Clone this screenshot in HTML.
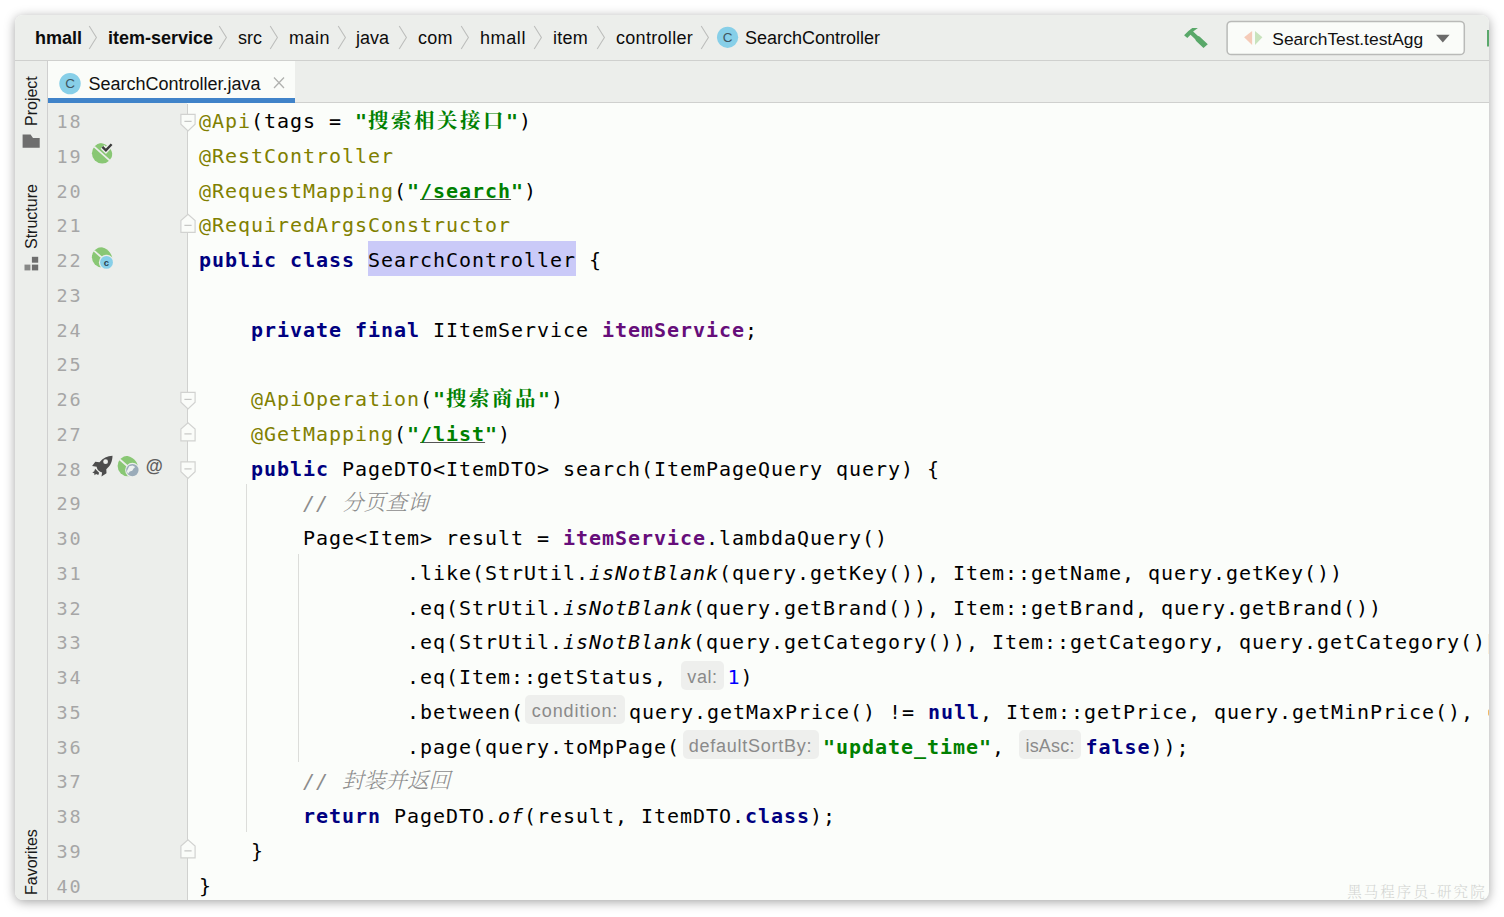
<!DOCTYPE html>
<html lang="zh-CN">
<head>
<meta charset="utf-8">
<title>SearchController.java</title>
<style>
html,body{margin:0;padding:0;background:#fff;}
body{width:1504px;height:917px;overflow:hidden;position:relative;font-family:"Liberation Sans","Noto Sans CJK SC",sans-serif;}
#win{position:absolute;left:15px;top:15px;width:1474px;height:885px;border-radius:8px;overflow:hidden;background:#fbfdfa;box-shadow:0 2px 11px rgba(0,0,0,.36);}
#win *{box-sizing:border-box;}
.abs{position:absolute;}
#nav{position:absolute;left:0;top:0;width:1474px;height:46px;background:#eceeeb;border-bottom:1px solid #cfd0ce;}
#nav .bc{position:absolute;top:11.5px;font-size:18px;line-height:22px;color:#0c0c0c;white-space:nowrap;}
#nav .b{font-weight:bold;}
#tabs{position:absolute;left:33px;top:46px;width:1441px;height:42px;background:#eceeeb;border-bottom:1px solid #cfd0ce;}
#tab{position:absolute;left:0;top:0;width:247px;height:42px;background:#fafcf9;border-bottom:5px solid #4083c9;}
#strip{position:absolute;left:0;top:46px;width:33px;height:839px;background:#eceeeb;border-right:1px solid #cfcfcf;}
.vt{position:absolute;left:0;height:33px;line-height:33px;font-size:16px;color:#1a1a1a;white-space:nowrap;transform-origin:0 0;transform:rotate(-90deg);}
#gutter{position:absolute;left:33px;top:88px;width:139px;height:797px;background:#eceeeb;}
#gline{position:absolute;left:172px;top:89px;width:1px;height:796px;background:#d0d1cf;}
#ed{position:absolute;left:173px;top:87px;width:1301px;height:798px;overflow:hidden;}
.ln{position:absolute;left:41.4px;height:34.75px;line-height:34.75px;font-family:"DejaVu Sans Mono","Liberation Mono",monospace;font-size:18.5px;letter-spacing:1.862px;color:#a6a6a6;white-space:pre;}
.cl{position:absolute;left:11px;height:34.75px;line-height:34.75px;font-family:"DejaVu Sans Mono","Liberation Mono",monospace;font-size:20.0px;letter-spacing:0.959px;color:#000;white-space:pre;}
.k{color:#000080;font-weight:bold;}
.a{color:#808000;}
.s{color:#008000;font-weight:bold;}
.f{color:#660e7a;font-weight:bold;}
.c{color:#8c8c8c;font-style:italic;}
.n{color:#0000ff;}
.i{font-style:italic;}
.u{text-decoration:underline;text-decoration-color:#555;text-decoration-thickness:1px;text-underline-offset:0.5px;text-decoration-skip-ink:none;}
.hlr{position:absolute;background:#cacaf8;}
.z{font-family:"Noto Serif CJK SC",serif;font-size:20.5px;letter-spacing:2.5px;font-weight:bold;line-height:20px;}
.zc{font-family:"Noto Serif CJK SC",serif;font-size:21.7px;letter-spacing:0;font-weight:300;line-height:20px;}
.hint{display:inline-block;vertical-align:top;height:29px;line-height:33.5px;margin-top:0.5px;background:#eeefed;border-radius:5px;color:#8a8a8a;font-family:"Liberation Sans",sans-serif;font-weight:normal;font-style:normal;text-align:center;white-space:nowrap;overflow:hidden;}
.guide{position:absolute;width:1px;background:#dcddda;}
#wm{position:absolute;right:2.3px;bottom:-0.5px;font-family:"Noto Serif CJK SC",serif;font-size:14.5px;font-weight:300;letter-spacing:2.07px;line-height:20px;color:#d3d5d2;white-space:nowrap;}
</style>
</head>
<body>
<div id="win">
<div id="nav">
<span class="bc b" style="left:20px">hmall</span>
<span class="bc b" style="left:93px">item-service</span>
<span class="bc" style="left:223px">src</span>
<span class="bc" style="left:274px;letter-spacing:0.5px">main</span>
<span class="bc" style="left:341px">java</span>
<span class="bc" style="left:403px;letter-spacing:0.3px">com</span>
<span class="bc" style="left:465px;letter-spacing:0.6px">hmall</span>
<span class="bc" style="left:538px;letter-spacing:0.25px">item</span>
<span class="bc" style="left:601px;letter-spacing:0.3px">controller</span>
<span class="bc" style="left:730px">SearchController</span>
<svg class="abs" style="left:0;top:0" width="1474" height="45" viewBox="0 0 1474 45">
<g fill="none" stroke="#bdbebc" stroke-width="1.1">
<path d="M74.2 11 L81.4 22.5 L74.2 34"/>
<path d="M204.2 11 L211.4 22.5 L204.2 34"/>
<path d="M255.2 11 L262.4 22.5 L255.2 34"/>
<path d="M323.2 11 L330.4 22.5 L323.2 34"/>
<path d="M384.2 11 L391.4 22.5 L384.2 34"/>
<path d="M446.2 11 L453.4 22.5 L446.2 34"/>
<path d="M519.2 11 L526.4 22.5 L519.2 34"/>
<path d="M582.2 11 L589.4 22.5 L582.2 34"/>
<path d="M686.2 11 L693.4 22.5 L686.2 34"/>
</g>
<circle cx="712.6" cy="22.3" r="10.6" fill="#87cfe8"/>
<text x="712.6" y="27" text-anchor="middle" font-family="Liberation Sans, sans-serif" font-size="13.5" fill="#3f5560">C</text>
<!-- hammer -->
<path d="M1169.1 20.2 L1172.3 23.1 L1175.5 19.7 L1180 23.9 L1181.1 26.1 L1188.5 33 L1192.8 29.3 L1184.5 21.5 L1182.7 20.7 L1178.1 16.5 L1182.9 13 L1177.3 13 L1173.4 16 Z" fill="#59a869"/>
<!-- run config box -->
<rect x="1212.1" y="6.4" width="237.2" height="33.2" rx="4.2" ry="4.2" fill="#fafcf9" stroke="#b9bab8" stroke-width="1.5"/>
<path d="M1237.1 16 L1237.1 30 L1229.1 22.3 Z" fill="#f5cbb8"/>
<path d="M1240 16 L1240 30 L1247.4 22.3 Z" fill="#c8e3bd"/>
<text x="1257.3" y="30.1" font-family="Liberation Sans, sans-serif" font-size="17.4" fill="#111">SearchTest.testAgg</text>
<path d="M1421 19.8 L1434.6 19.8 L1427.8 27.6 Z" fill="#6a6a6a"/>
<rect x="1472" y="15" width="2" height="16.5" fill="#5aa86b"/>
</svg>
</div>
<div id="tabs"><div id="tab">
<svg class="abs" style="left:0;top:0" width="247" height="37" viewBox="0 0 247 37">
<circle cx="22" cy="22.6" r="10.7" fill="#87cfe8"/>
<text x="22" y="27.3" text-anchor="middle" font-family="Liberation Sans, sans-serif" font-size="13.5" fill="#3f5560">C</text>
<text x="40.5" y="29.1" font-family="Liberation Sans, sans-serif" font-size="18" fill="#111">SearchController.java</text>
<path d="M226 16.5 L236 27 M236 16.5 L226 27" stroke="#b0b1af" stroke-width="1.3" fill="none"/>
</svg>
</div></div>
<div id="gutter"></div>
<div id="gline"></div>
<div id="strip">
<div class="vt" style="top:64.6px;">Project</div>
<div class="vt" style="top:188px;">Structure</div>
<div class="vt" style="top:834.4px;">Favorites</div>
<svg class="abs" style="left:0;top:0" width="33" height="839" viewBox="0 0 33 839">
<path d="M7.6 73.5 L15.6 73.5 L18 77 L24.7 77 L24.7 86.8 L7.6 86.8 Z" fill="#6e6e6e"/>
<g fill="#6e6e6e"><rect x="16.9" y="195.8" width="6.3" height="5.9"/><rect x="9.5" y="203.6" width="5.9" height="5.8" opacity=".8"/><rect x="16.9" y="203.6" width="6.3" height="5.8"/></g>
</svg>
</div>
<div class="ln" style="top:90.10px">18</div>
<div class="ln" style="top:124.85px">19</div>
<div class="ln" style="top:159.60px">20</div>
<div class="ln" style="top:194.35px">21</div>
<div class="ln" style="top:229.10px">22</div>
<div class="ln" style="top:263.85px">23</div>
<div class="ln" style="top:298.60px">24</div>
<div class="ln" style="top:333.35px">25</div>
<div class="ln" style="top:368.10px">26</div>
<div class="ln" style="top:402.85px">27</div>
<div class="ln" style="top:437.60px">28</div>
<div class="ln" style="top:472.35px">29</div>
<div class="ln" style="top:507.10px">30</div>
<div class="ln" style="top:541.85px">31</div>
<div class="ln" style="top:576.60px">32</div>
<div class="ln" style="top:611.35px">33</div>
<div class="ln" style="top:646.10px">34</div>
<div class="ln" style="top:680.85px">35</div>
<div class="ln" style="top:715.60px">36</div>
<div class="ln" style="top:750.35px">37</div>
<div class="ln" style="top:785.10px">38</div>
<div class="ln" style="top:819.85px">39</div>
<div class="ln" style="top:854.60px">40</div>
<div id="ed">
<div class="guide" style="left:58px;top:382.25px;height:347.50px"></div>
<div class="guide" style="left:110px;top:451.75px;height:208.50px"></div>
<div class="hlr" style="left:180.0px;top:139.00px;width:208.0px;height:34.75px"></div>
<div class="cl" style="top:2.00px"><span class="a">@Api</span>(tags = <span class="s">"<span class="z">搜索相关接口</span>"</span>)</div>
<div class="cl" style="top:36.75px"><span class="a">@RestController</span></div>
<div class="cl" style="top:71.50px"><span class="a">@RequestMapping</span>(<span class="s">"<span class="u">/search</span>"</span>)</div>
<div class="cl" style="top:106.25px"><span class="a">@RequiredArgsConstructor</span></div>
<div class="cl" style="top:141.00px"><span class="k">public class </span>SearchController {</div>
<div class="cl" style="top:175.75px"></div>
<div class="cl" style="top:210.50px">    <span class="k">private final </span>IItemService <span class="f">itemService</span>;</div>
<div class="cl" style="top:245.25px"></div>
<div class="cl" style="top:280.00px">    <span class="a">@ApiOperation</span>(<span class="s">"<span class="z">搜索商品</span>"</span>)</div>
<div class="cl" style="top:314.75px">    <span class="a">@GetMapping</span>(<span class="s">"<span class="u">/list</span>"</span>)</div>
<div class="cl" style="top:349.50px">    <span class="k">public </span>PageDTO&lt;ItemDTO&gt; search(ItemPageQuery query) {</div>
<div class="cl" style="top:384.25px">        <span class="c">// <span class="zc">分页查询</span></span></div>
<div class="cl" style="top:419.00px">        Page&lt;Item&gt; result = <span class="f">itemService</span>.lambdaQuery()</div>
<div class="cl" style="top:453.75px">                .like(StrUtil.<span class="i">isNotBlank</span>(query.getKey()), Item::getName, query.getKey())</div>
<div class="cl" style="top:488.50px">                .eq(StrUtil.<span class="i">isNotBlank</span>(query.getBrand()), Item::getBrand, query.getBrand())</div>
<div class="cl" style="top:523.25px">                .eq(StrUtil.<span class="i">isNotBlank</span>(query.getCategory()), Item::getCategory, query.getCategory())</div>
<div class="cl" style="top:558.00px">                .eq(Item::getStatus, <span class="hint" style="width:43px;font-size:18px;letter-spacing:0.6px;margin-left:1px;margin-right:3.5px">val:</span><span class="n">1</span>)</div>
<div class="cl" style="top:592.75px">                .between(<span class="hint" style="width:100px;font-size:18px;letter-spacing:0.95px;margin-left:1px;margin-right:4px">condition:</span>query.getMaxPrice() != <span class="k">null</span>, Item::getPrice, query.getMinPrice(), </div>
<div class="cl" style="top:627.50px">                .page(query.toMpPage(<span class="hint" style="width:136px;font-size:18px;letter-spacing:0.75px;margin-left:2.5px;margin-right:4.5px">defaultSortBy:</span><span class="s">"update_time"</span>, <span class="hint" style="width:62px;font-size:18px;letter-spacing:0.2px;margin-left:1px;margin-right:4.5px">isAsc:</span><span class="k">false</span>));</div>
<div class="cl" style="top:662.25px">        <span class="c">// <span class="zc">封装并返回</span></span></div>
<div class="cl" style="top:697.00px">        <span class="k">return </span>PageDTO.<span class="i">of</span>(result, ItemDTO.<span class="k">class</span>);</div>
<div class="cl" style="top:731.75px">    }</div>
<div class="cl" style="top:766.50px">}</div>
<div class="abs" style="left:1299.6px;top:607.2px;width:2px;height:6.5px;border-radius:2px 0 0 2px;background:#f2b964"></div>
<div class="abs" style="left:1300px;top:532.2px;width:1px;height:20px;background:#fbefdb"></div>
<div id="wm">黑马程序员-研究院</div>
</div>
<svg class="abs" style="left:-15px;top:-15px" width="1504" height="917" viewBox="0 0 1504 917">
<path d="M180.9 114.4 H195.1 V124.2 L188 131.0 L180.9 124.2 Z" fill="#fafcf9" stroke="#d1d2d0" stroke-width="1.2"/><path d="M184.4 121.4 H191.6" stroke="#c6c7c5" stroke-width="1.2"/>
<path d="M180.9 392.4 H195.1 V402.2 L188 409.0 L180.9 402.2 Z" fill="#fafcf9" stroke="#d1d2d0" stroke-width="1.2"/><path d="M184.4 399.4 H191.6" stroke="#c6c7c5" stroke-width="1.2"/>
<path d="M180.9 461.9 H195.1 V471.7 L188 478.5 L180.9 471.7 Z" fill="#fafcf9" stroke="#d1d2d0" stroke-width="1.2"/><path d="M184.4 468.9 H191.6" stroke="#c6c7c5" stroke-width="1.2"/>
<path d="M180.9 232.4 H195.1 V220.5 L188 214.2 L180.9 220.5 Z" fill="#fafcf9" stroke="#d1d2d0" stroke-width="1.2"/><path d="M184.4 225.4 H191.6" stroke="#c6c7c5" stroke-width="1.2"/>
<path d="M180.9 440.9 H195.1 V429.0 L188 422.7 L180.9 429.0 Z" fill="#fafcf9" stroke="#d1d2d0" stroke-width="1.2"/><path d="M184.4 433.9 H191.6" stroke="#c6c7c5" stroke-width="1.2"/>
<path d="M180.9 857.9 H195.1 V846.0 L188 839.7 L180.9 846.0 Z" fill="#fafcf9" stroke="#d1d2d0" stroke-width="1.2"/><path d="M184.4 850.9 H191.6" stroke="#c6c7c5" stroke-width="1.2"/>
<defs><mask id="m19"><rect x="80" y="138.2" width="40" height="30" fill="#fff"/><path d="M102.4 146.8 L105.9 150.3 L111.6 144.2" fill="none" stroke="#000" stroke-width="5.2"/></mask></defs>
<defs><clipPath id="lf1"><circle cx="99.2" cy="156.2" r="13.3"/></clipPath></defs><g mask="url(#m19)"><circle cx="102.2" cy="153.2" r="10.3" fill="#89c774" clip-path="url(#lf1)"/><path d="M94.2 146.7 L111.2 161.8" stroke="#eceeeb" stroke-width="1.8"/></g>
<path d="M102.4 146.8 L105.9 150.3 L111.6 144.2" fill="none" stroke="#3c3c3c" stroke-width="2.4"/>
<defs><mask id="m22"><rect x="80" y="242.3" width="40" height="30" fill="#fff"/><circle cx="106.5" cy="262.4" r="7.6" fill="#000"/></mask></defs>
<defs><clipPath id="lf2"><circle cx="99.2" cy="260.3" r="13.3"/></clipPath></defs><g mask="url(#m22)"><circle cx="102.2" cy="257.3" r="10.3" fill="#89c774" clip-path="url(#lf2)"/><path d="M94.2 250.8 L111.2 265.9" stroke="#eceeeb" stroke-width="1.8"/></g>
<circle cx="106.5" cy="262.4" r="6.4" fill="#87cfe8"/>
<text x="106.5" y="265.5" text-anchor="middle" font-family="Liberation Sans, sans-serif" font-weight="bold" font-size="9.5" fill="#2b4450">c</text>
<g transform="translate(91.9,455.6)" fill="#4d4d4d"><path d="M20.6 0.2 C15.5 0.4 10.8 2.6 7.6 6.6 L3.4 6.2 L0.2 10.4 L4.8 11.2 C4.9 12.6 5.6 14 6.6 15 C7.6 16 8.9 16.6 10.2 16.8 L9.6 20.8 L14.6 17.6 L14.4 13.6 C18.6 10.4 20.6 5.4 20.6 0.2 Z"/><path d="M3.2 13.2 L5.2 15.2 L7.2 17.2 L6.4 19.4 L4.2 18.4 L2.6 19.6 L2.4 17.6 L0.4 16.8 L2.4 15.6 Z"/><circle cx="13.7" cy="6.1" r="2.4" fill="#eceeeb"/></g>
<defs><mask id="m28"><rect x="105" y="451.0" width="40" height="30" fill="#fff"/><circle cx="132.4" cy="470.1" r="7.3" fill="#000"/></mask></defs>
<defs><clipPath id="lf3"><circle cx="124.9" cy="469.0" r="13.3"/></clipPath></defs><g mask="url(#m28)"><circle cx="127.9" cy="466.0" r="10.3" fill="#89c774" clip-path="url(#lf3)"/><path d="M119.9 459.5 L136.9 474.6" stroke="#eceeeb" stroke-width="1.8"/></g>
<circle cx="132.4" cy="470.1" r="6.2" fill="#9aabb9"/>
<path d="M129.2 466.2 l3.4 -0.8 l2.6 1.6 l-1.6 1.6 l-1.4 2.2 l-2.4 0.6 l-1.8 2.4 l-1.2 -2.6 Z" fill="#eef1f0"/>
<text x="154.4" y="471.6" text-anchor="middle" font-family="Liberation Sans, sans-serif" font-size="17.5" font-weight="bold" fill="#5e5e5e">@</text>
</svg>
</div>
</body>
</html>
